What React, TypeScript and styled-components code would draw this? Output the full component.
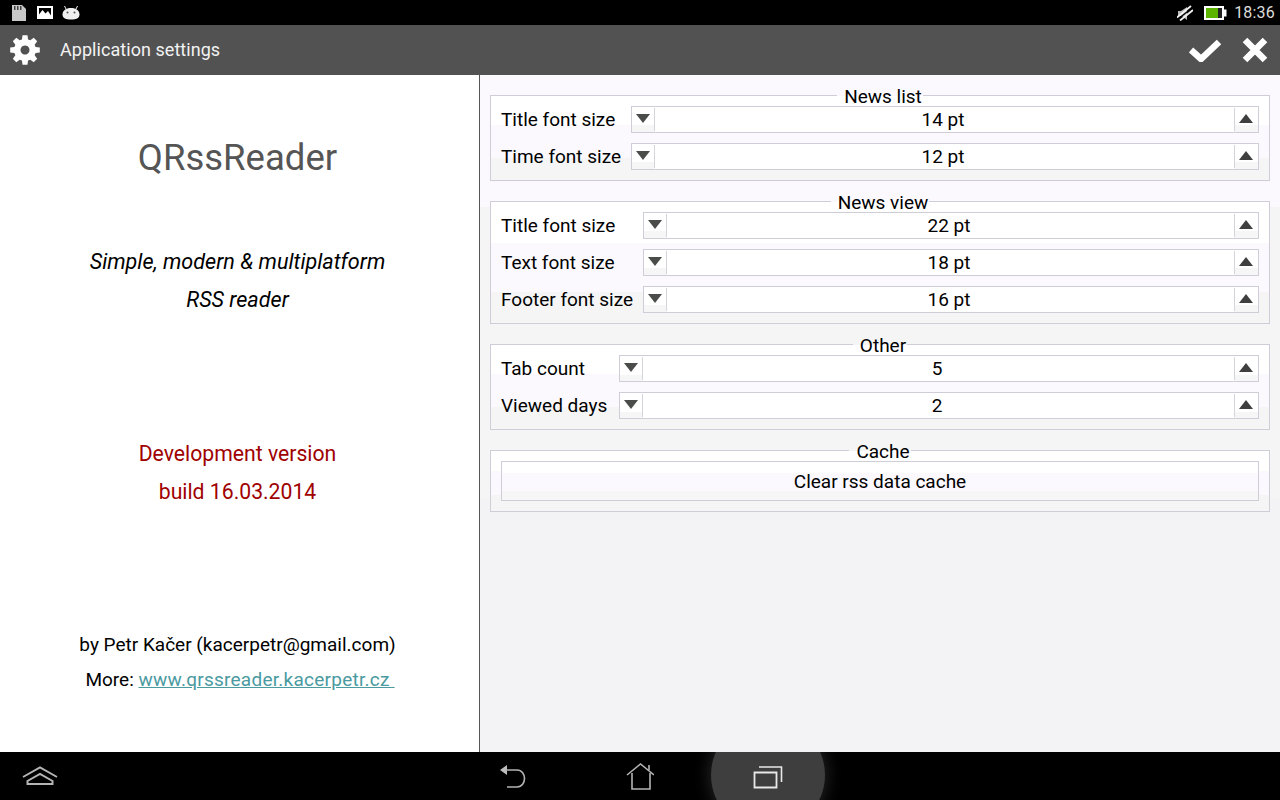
import React from "react";
import styled, { createGlobalStyle } from "styled-components";

const Global = createGlobalStyle`
  html, body { margin: 0; padding: 0; background: #000; }
  body { font-family: Roboto, "Noto Sans", sans-serif; }
  #root { width: 1280px; height: 800px; overflow: hidden; }
`;

const Screen = styled.div`
  width: 1280px;
  height: 800px;
  display: flex;
  flex-direction: column;
`;

const StatusBar = styled.header`
  height: 25px;
  flex: none;
  background: #000;
  display: flex;
  align-items: center;
  padding: 0 5px 0 12px;
`;

const StatusGroup = styled.div<{ $gap: number }>`
  display: flex;
  align-items: center;
  gap: ${(p) => p.$gap}px;
`;

const Clock = styled.span`
  font-size: 16px;
  color: #dcdcdc;
  line-height: 25px;
  letter-spacing: 0.2px;
  margin-left: -4px;
`;

const StatusSpacer = styled.div`
  flex: 1;
`;

const ActionBar = styled.div`
  height: 50px;
  flex: none;
  background: #525252;
  display: flex;
  align-items: center;
  padding: 0 12px 0 10px;
`;

const ActionTitle = styled.h1`
  margin: 0 0 2px 20px;
  flex: 1;
  font-size: 18px;
  font-weight: 400;
  letter-spacing: 0.05px;
  color: #f2f2f2;
`;

const ActionButtons = styled.div`
  display: flex;
  align-items: center;
  gap: 21px;
`;

const Content = styled.main`
  flex: 1;
  min-height: 0;
  display: flex;
`;

const About = styled.aside`
  width: 479px;
  flex: none;
  box-sizing: border-box;
  background: #fff;
  padding: 62px 4px 0 0;
  display: flex;
  flex-direction: column;
  align-items: center;
  text-align: center;
`;

const Divider = styled.div`
  width: 1px;
  flex: none;
  background: #555;
`;

const AppName = styled.h2`
  margin: 0;
  font-size: 36.5px;
  line-height: 42px;
  font-weight: 400;
  color: #555;
`;

const Tagline = styled.p`
  margin: 64px 0 0;
  font-size: 21.6px;
  line-height: 38px;
  font-style: italic;
  color: #000;
`;

const Version = styled.p`
  margin: 116px 0 0;
  font-size: 21.2px;
  line-height: 38px;
  color: #a00000;
`;

const Credits = styled.div`
  margin-top: 116px;
  font-size: 19px;
  line-height: 35px;
  color: #000;
`;

const MoreLine = styled.span`
  display: block;
  padding-left: 5px;
`;

const Link = styled.a`
  color: #4a9a9f;
  text-decoration: underline;
  white-space: pre;
  letter-spacing: 0.25px;
`;

const Settings = styled.section`
  flex: 1;
  box-sizing: border-box;
  padding: 10px 10px 0;
  display: flex;
  flex-direction: column;
  gap: 10px;
  background: linear-gradient(#fbf9fd 0, #fbf9fd 132px, #f5f5f5 132px, #f5f5f5 423px, #f3f2f5 423px);
`;

const Group = styled.fieldset`
  margin: 0;
  padding: 0 10px 10px;
  border: 1px solid #cfcdd8;
  min-width: 0;
  background: linear-gradient(#fff 0, #fff 34%, #fbf9fd 34%, #fbf9fd 74%, #f5f5f5 74%);
`;

const GroupTitle = styled.legend`
  margin: 0 auto;
  padding: 2px 1px 0 7px;
  font-size: 19px;
  line-height: 19px;
  color: #000;
`;

const Rows = styled.div<{ $label: number }>`
  display: grid;
  grid-template-columns: ${(p) => p.$label}px 1fr;
  column-gap: 10px;
  row-gap: 10px;
  align-items: center;
`;

const RowLabel = styled.label`
  font-size: 19px;
  line-height: 27px;
  color: #000;
  white-space: nowrap;
`;

const Spin = styled.div`
  height: 27px;
  box-sizing: border-box;
  border: 1px solid #cfcdd8;
  display: flex;
  background: #fff;
`;

const SpinStep = styled.button<{ $w: number; $side: string }>`
  width: ${(p) => p.$w}px;
  flex: none;
  margin: 0;
  border: 0;
  padding: ${(p) => (p.$side === "right" ? "0 1px 0 0" : "0")};
  background: linear-gradient(#fff 0, #fff 74%, #f6f6f7 74%);
  display: flex;
  align-items: flex-start;
  justify-content: center;
  position: relative;
  &::after {
    content: "";
    position: absolute;
    top: 1px;
    bottom: 1px;
    width: 1px;
    background: #d5d3dc;
    ${(p) => p.$side}: 0;
  }
`;

const SpinValue = styled.div`
  flex: 1;
  padding-right: 3px;
  text-align: center;
  font-size: 19px;
  line-height: 25px;
  color: #000;
`;

const Arrow = styled.span<{ $up?: boolean }>`
  margin-top: 7px;
  width: 0;
  height: 0;
  border-left: 7px solid transparent;
  border-right: 7px solid transparent;
  ${(p) => (p.$up ? "border-bottom: 9px solid #3f3f3f;" : "border-top: 9px solid #4a4c4a;")}
`;

const ActionWide = styled.button`
  display: block;
  width: 100%;
  height: 40px;
  margin: 0;
  box-sizing: border-box;
  border: 1px solid #cfcdd8;
  padding: 0;
  font: 400 19px Roboto, sans-serif;
  color: #000;
  background: linear-gradient(#fff 0, #fff 30%, #fbf9fd 30%, #fbf9fd 75%, #f6f6f7 75%);
`;

const NavBar = styled.nav`
  height: 48px;
  flex: none;
  background: #000;
  overflow: hidden;
  display: flex;
  align-items: center;
  padding-left: 22px;
`;

const NavSlot = styled.div<{ $w: number }>`
  display: flex;
  align-items: center;
  justify-content: center;
  height: 48px;
  width: ${(p) => p.$w}px;
  flex: none;
  position: relative;
`;

const NavGlow = styled.span`
  position: absolute;
  left: 0;
  top: -34px;
  width: 114px;
  height: 114px;
  border-radius: 50%;
  background: #3e3e3e;
  box-shadow: 0 0 16px 2px rgba(255, 255, 255, 0.14);
`;

const NavIcon = styled.svg`
  position: relative;
  display: block;
`;

const Spinner = ({ value }: { value: string }) => (
  <Spin>
    <SpinStep $w={23} $side="right" type="button" aria-label="down">
      <Arrow />
    </SpinStep>
    <SpinValue>{value}</SpinValue>
    <SpinStep $w={24} $side="left" type="button" aria-label="up">
      <Arrow $up />
    </SpinStep>
  </Spin>
);

const settings = [
  {
    title: "News list",
    label: 120,
    rows: [
      ["Title font size", "14 pt"],
      ["Time font size", "12 pt"],
    ],
  },
  {
    title: "News view",
    label: 132,
    rows: [
      ["Title font size", "22 pt"],
      ["Text font size", "18 pt"],
      ["Footer font size", "16 pt"],
    ],
  },
  {
    title: "Other",
    label: 108,
    rows: [
      ["Tab count", "5"],
      ["Viewed days", "2"],
    ],
  },
];

const gearPath = (() => {
  const cx = 15, cy = 15, teeth = 8;
  const pts: string[] = [];
  for (let i = 0; i < teeth; i++) {
    const a = (i * 2 * Math.PI) / teeth - Math.PI / 2;
    const s = Math.PI / teeth;
    const p = (r: number, t: number) =>
      `${(cx + r * Math.cos(t)).toFixed(2)} ${(cy + r * Math.sin(t)).toFixed(2)}`;
    pts.push(p(11, a - s * 0.72), p(15, a - s * 0.42), p(15, a + s * 0.42), p(11, a + s * 0.72));
  }
  return `M${pts.join("L")}Z`;
})();

export default function App() {
  return (
    <Screen>
      <Global />
      <StatusBar>
        <StatusGroup $gap={11}>
          <svg width="14" height="16" viewBox="0 0 14 16">
            <path d="M0 0H10L14 4V16H0Z" fill="#c8c8c8" />
            <path d="M2 1H3.5V5H2ZM5 1H6.5V5H5ZM8 1H9.5V5H8Z" fill="#444" />
          </svg>
          <svg width="16" height="13" viewBox="0 0 16 13">
            <path d="M0 0H16V13H0Z" fill="#fff" />
            <path d="M2 2H14V9.5L11 5 8.5 7.5 5.5 4 2 8.5Z" fill="#000" />
          </svg>
          <svg width="18" height="14" viewBox="0 0 18 14" style={{ marginLeft: -2 }}>
            <path
              d="M0.5 8.5C0.5 4.5 4 2 9 2S17.5 4.5 17.5 8.5C17.5 12.5 14 13.5 9 13.5S0.5 12.5 0.5 8.5Z"
              fill="#f0f0f0"
            />
            <path d="M4 3L2.5 0M14 3L15.5 0" stroke="#f0f0f0" strokeWidth="1" />
            <circle cx="5.5" cy="6.5" r="1" fill="#555" />
            <circle cx="12.5" cy="6.5" r="1" fill="#555" />
          </svg>
        </StatusGroup>
        <StatusSpacer />
        <StatusGroup $gap={11}>
          <svg width="16" height="16" viewBox="0 0 16 16">
            <path d="M1 6H4L10 2V15L5 11H1Z" fill="#b8b8b8" />
            <path d="M0 12.5L14 1M3 15.5L16 5" stroke="#f0f0f0" strokeWidth="1.8" />
            <path d="M1 14L15 3" stroke="#000" strokeWidth="1.2" />
          </svg>
          <svg width="23" height="14" viewBox="0 0 23 14">
            <path d="M0 0H20V3.5H22.5V10.5H20V14H0Z" fill="#fff" />
            <path d="M2 2H18V12H2Z" fill="#222" />
            <path d="M2 2H14V12H2Z" fill="#5cb400" />
          </svg>
          <Clock>18:36</Clock>
        </StatusGroup>
      </StatusBar>
      <ActionBar>
        <svg width="30" height="30" viewBox="0 0 30 30">
          <path fillRule="evenodd" d={`${gearPath}M15 10.5a4.5 4.5 0 1 0 .01 0Z`} fill="#fff" />
        </svg>
        <ActionTitle>Application settings</ActionTitle>
        <ActionButtons>
          <svg width="32" height="24" viewBox="0 0 32 24">
            <path d="M2 12L12 21 30 4" fill="none" stroke="#fff" strokeWidth="6.5" />
          </svg>
          <svg width="26" height="26" viewBox="0 0 26 26">
            <path d="M3 3L23 23M23 3L3 23" fill="none" stroke="#fff" strokeWidth="6.5" />
          </svg>
        </ActionButtons>
      </ActionBar>
      <Content>
        <About>
          <AppName>QRssReader</AppName>
          <Tagline>
            Simple, modern &amp; multiplatform
            <br />
            RSS reader
          </Tagline>
          <Version>
            Development version
            <br />
            build 16.03.2014
          </Version>
          <Credits>
            by Petr Kačer (kacerpetr@gmail.com)
            <MoreLine>
              More: <Link href="#">www.qrssreader.kacerpetr.cz </Link>
            </MoreLine>
          </Credits>
        </About>
        <Divider />
        <Settings>
          {settings.map((g) => (
            <Group key={g.title}>
              <GroupTitle>{g.title}</GroupTitle>
              <Rows $label={g.label}>
                {g.rows.map(([label, value]) => (
                  <React.Fragment key={label}>
                    <RowLabel>{label}</RowLabel>
                    <Spinner value={value} />
                  </React.Fragment>
                ))}
              </Rows>
            </Group>
          ))}
          <Group>
            <GroupTitle>Cache</GroupTitle>
            <ActionWide type="button">Clear rss data cache</ActionWide>
          </Group>
        </Settings>
      </Content>
      <NavBar>
        <NavSlot $w={36}>
          <NavIcon width="36" height="20" viewBox="0 0 36 20">
            <path d="M1 11L18 1.5 35 11" fill="none" stroke="#b4b4b4" strokeWidth="2" />
            <path d="M5.5 18V15L18 8 30.5 15V18Z" fill="none" stroke="#b4b4b4" strokeWidth="2" />
          </NavIcon>
        </NavSlot>
        <NavSlot $w={425} />
        <NavSlot $w={60}>
          <NavIcon width="28" height="26" viewBox="0 0 28 26">
            <path d="M1 7L8 2V12Z" fill="#bdbdbd" />
            <path d="M6 7H18C28 7 28 24 18 24H8" fill="none" stroke="#b4b4b4" strokeWidth="1.6" />
          </NavIcon>
        </NavSlot>
        <NavSlot $w={83} />
        <NavSlot $w={28}>
          <NavIcon width="28" height="28" viewBox="0 0 28 28">
            <path d="M1 13L14.5 2 28 13" fill="none" stroke="#b4b4b4" strokeWidth="1.6" />
            <path d="M6 11V27H24V11M23 3V8" fill="none" stroke="#b4b4b4" strokeWidth="1.6" />
          </NavIcon>
        </NavSlot>
        <NavSlot $w={57} />
        <NavSlot $w={114}>
          <NavGlow />
          <NavIcon width="30" height="26" viewBox="0 0 30 26">
            <path d="M1.5 9.5H23.5V24.5H1.5Z" fill="none" stroke="#e8e8e8" strokeWidth="1.8" />
            <path d="M6 4H28.5V19" fill="none" stroke="#e8e8e8" strokeWidth="1.6" />
          </NavIcon>
        </NavSlot>
      </NavBar>
    </Screen>
  );
}
